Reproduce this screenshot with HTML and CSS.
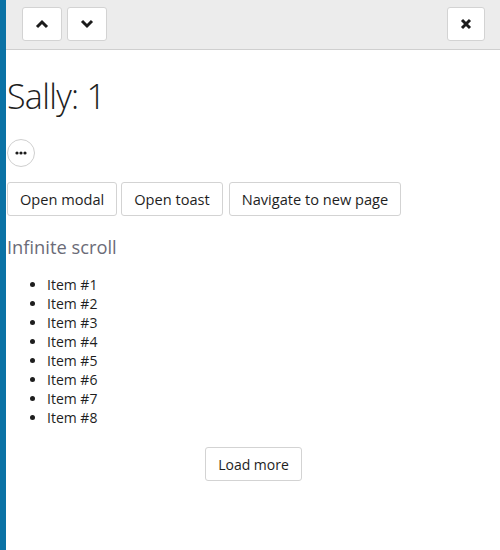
FILE: index.html
```html
<!DOCTYPE html>
<html>
<head>
<meta charset="utf-8">
<link rel="stylesheet" href="styles.css">
</head>
<body>
<div class="app">
  <div class="sidebar"></div>
  <div class="main">
    <div class="toolbar">
      <div class="nav">
        <button class="tbtn" aria-label="Previous">
          <svg width="14" height="10" viewBox="0 0 14 10"><path d="M2 8 L7 3 L12 8" fill="none" stroke="#1b1b1b" stroke-width="3"/></svg>
        </button>
        <button class="tbtn" aria-label="Next">
          <svg width="14" height="10" viewBox="0 0 14 10"><path d="M2 2 L7 7 L12 2" fill="none" stroke="#1b1b1b" stroke-width="3"/></svg>
        </button>
      </div>
      <button class="tbtn close" aria-label="Close">
        <svg width="12" height="12" viewBox="0 0 12 12"><path d="M2 2 L10 10 M10 2 L2 10" fill="none" stroke="#1b1b1b" stroke-width="3"/></svg>
      </button>
    </div>
    <div class="content">
      <h1 class="title">Sally: 1</h1>
      <button class="more" aria-label="More">
        <svg width="12" height="4" viewBox="0 0 12 4"><circle cx="2" cy="2" r="1.6" fill="#1b1b1b"/><circle cx="6" cy="2" r="1.6" fill="#1b1b1b"/><circle cx="10" cy="2" r="1.6" fill="#1b1b1b"/></svg>
      </button>
      <div class="actions">
        <button class="btn">Open modal</button>
        <button class="btn">Open toast</button>
        <button class="btn">Navigate to new page</button>
      </div>
      <h2 class="subtitle">Infinite scroll</h2>
      <ul class="items">
        <li>Item #1</li>
        <li>Item #2</li>
        <li>Item #3</li>
        <li>Item #4</li>
        <li>Item #5</li>
        <li>Item #6</li>
        <li>Item #7</li>
        <li>Item #8</li>
      </ul>
      <div class="load">
        <button class="btn">Load more</button>
      </div>
    </div>
  </div>
</div>
</body>
</html>
```
FILE: styles.css
```css
* { box-sizing: border-box; }
html, body { margin: 0; padding: 0; }
body {
  font-family: "Open Sans", "Noto Sans", sans-serif;
  color: #1e1e1e;
  background: #fff;
}
.app {
  display: flex;
  min-height: 550px;
}
.sidebar {
  width: 6px;
  flex: none;
  background: #0b72a5;
}
.main {
  flex: 1;
  min-width: 0;
}
.toolbar {
  height: 50px;
  background: #ececec;
  border-bottom: 1px solid #cfcfcf;
  display: flex;
  align-items: center;
  justify-content: space-between;
  padding: 0 15px 1px 16px;
}
.nav {
  display: flex;
  gap: 5px;
}
.tbtn {
  width: 40px;
  height: 34px;
  background: #fff;
  border: 1px solid #d3d3d3;
  border-radius: 3px;
  display: flex;
  align-items: center;
  justify-content: center;
  padding: 0;
}
.tbtn.close {
  width: 38px;
}
.content {
  padding-left: 1px;
}
.title {
  margin: 26px 0 0;
  font-size: 34px;
  font-weight: 300;
  line-height: 40px;
  letter-spacing: -0.7px;
}
.more {
  margin-top: 23px;
  width: 28px;
  height: 28px;
  border-radius: 50%;
  border: 1px solid #cfcfcf;
  background: #fff;
  display: flex;
  align-items: center;
  justify-content: center;
  padding: 0;
}
.actions {
  margin-top: 15px;
  display: flex;
  gap: 4px;
}
.btn {
  height: 34px;
  padding: 0 12px;
  background: #fff;
  border: 1px solid #d3d3d3;
  border-radius: 3px;
  font-family: inherit;
  font-size: 14.6px;
  color: #1e1e1e;
}
.actions .btn:last-child {
  margin-left: 2px;
}
.subtitle {
  margin: 19px 0 0;
  font-size: 18.3px;
  font-weight: 400;
  line-height: 24px;
  color: #6b6b78;
}
.items {
  margin: 16px 0 0;
  padding-left: 40px;
  font-size: 14px;
  line-height: 19px;
}
.load {
  margin-top: 20px;
  display: flex;
  justify-content: center;
}
.load .btn {
  font-size: 14px;
}
```
